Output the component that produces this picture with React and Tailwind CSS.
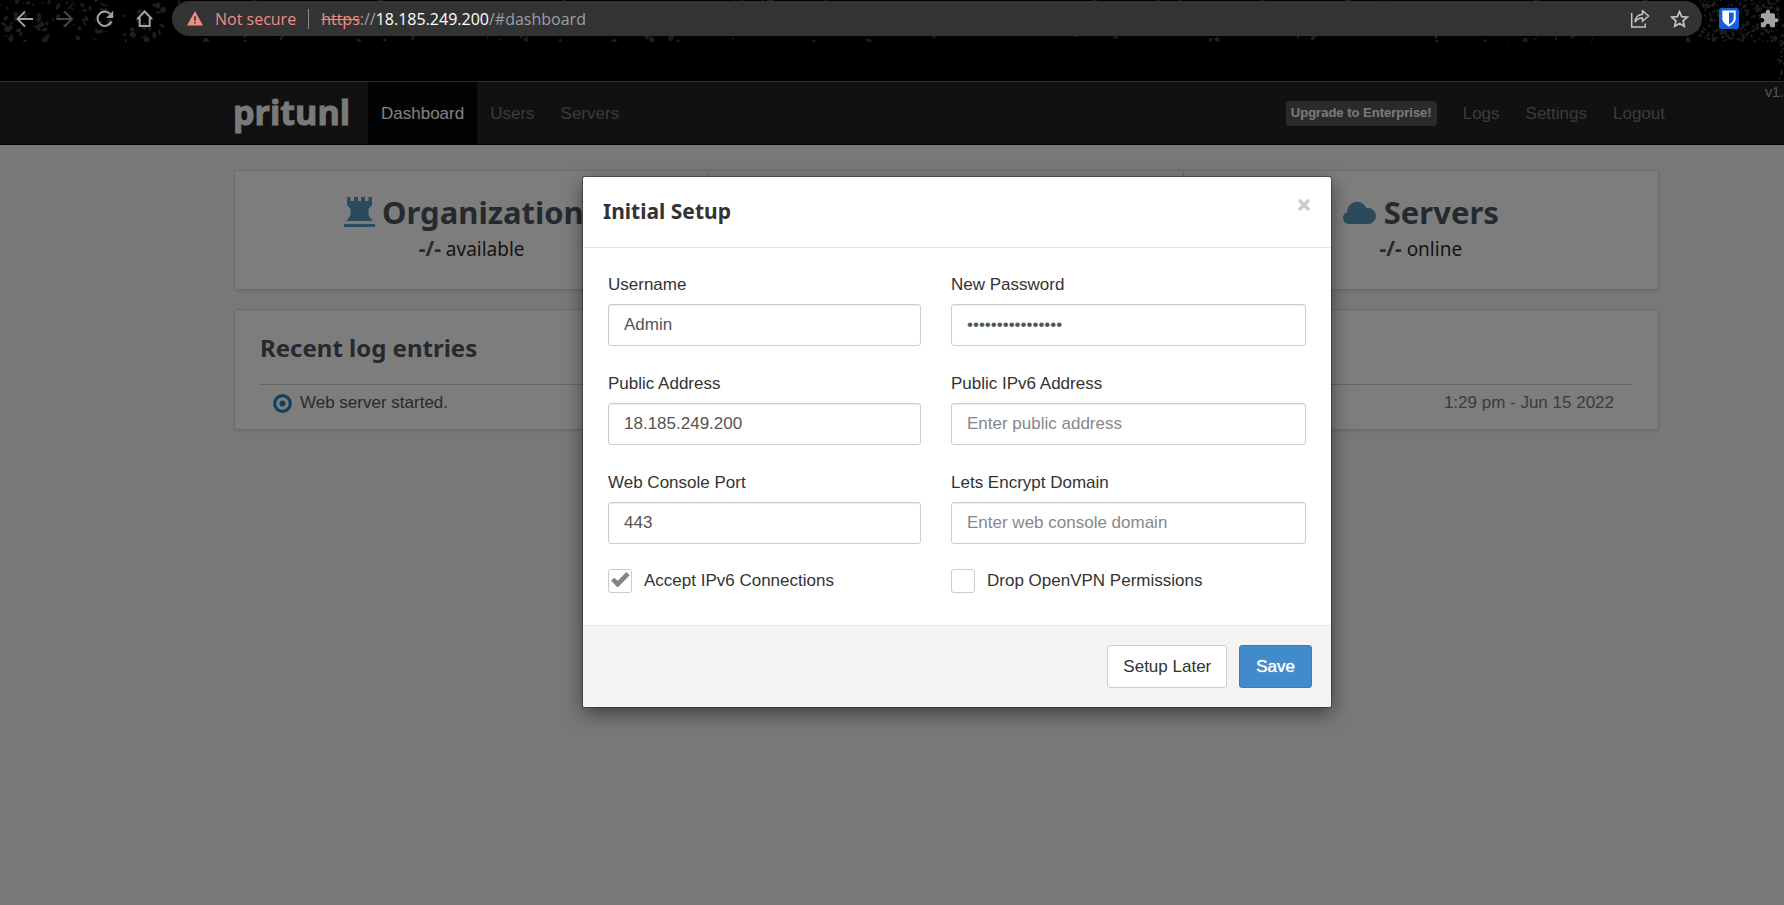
import React from "react";

function makeSpeckles() {
  let seed = 7;
  const rand = () => {
    seed = (seed * 16807) % 2147483647;
    return seed / 2147483647;
  };
  const dots = [];
  for (let i = 0; i < 520; i++) {
    const zone = rand();
    const right = zone > 0.65;
    const left = zone < 0.12;
    const x = right ? 1700 + rand() * 84 : left ? rand() * 172 : rand() * 1784;
    const y = rand() * 42;
    const w = right ? 1 + rand() * 3 : 1 + rand() * 5;
    dots.push({ x, y, w, h: 1 + rand() * (right ? 3 : 6), r: rand() * 180 });
  }
  for (let i = 0; i < 16; i++) {
    dots.push({ x: 1778 + rand() * 6, y: 42 + rand() * 38, w: 2, h: 3, r: rand() * 180 });
  }
  return dots;
}

const speckles = makeSpeckles();

function BrowserBar() {
  return (
    <header className="relative h-[81px] shrink-0 overflow-hidden bg-black font-['Open_Sans','Noto_Sans',sans-serif]">
      <svg className="absolute left-0 top-0 h-[81px] w-full" viewBox="0 0 1784 81" preserveAspectRatio="xMaxYMin slice" aria-hidden="true">
        {speckles.map((d, i) => (
          <ellipse key={i} cx={d.x} cy={d.y} rx={d.w / 2} ry={d.h / 2} fill="#1e1e1e" transform={`rotate(${d.r} ${d.x} ${d.y})`} />
        ))}
        <rect x="0" y="42" width="1776" height="39" fill="#000" />
      </svg>
      <div className="relative flex items-center pl-4 pt-px">
        <div className="flex w-[156px] shrink-0 gap-5">
          <button aria-label="Back" className="size-5">
            <svg viewBox="0 0 20 20" fill="none" stroke="#a3a3a3" strokeWidth="1.8">
              <path d="M17 10H2M9 2.500 1.500 10 9 17.500" />
            </svg>
          </button>
          <button aria-label="Forward" className="size-5">
            <svg viewBox="0 0 20 20" fill="none" stroke="#484848" strokeWidth="1.8">
              <path d="M.5 10H15.500M8.500 2.500 16 10l-7.500 7.500" />
            </svg>
          </button>
          <button aria-label="Reload" className="size-5">
            <svg viewBox="0 0 20 20" fill="none" stroke="#a3a3a3" strokeWidth="2">
              <path d="M15.400 12.500A7.200 7.200 0 1 1 14 4.800" />
              <path d="M17.200 1.800V9H10z" fill="#a3a3a3" stroke="none" />
            </svg>
          </button>
          <button aria-label="Home" className="size-5">
            <svg viewBox="0 0 20 20" fill="none" stroke="#a3a3a3" strokeWidth="2">
              <path d="M1.300 10 8.700 2.500 16 10M3.700 8.500v8.500h10V8.500" />
            </svg>
          </button>
        </div>
        <div className="flex h-[35px] min-w-0 flex-1 items-center rounded-full bg-[#333333] pl-[15px] pr-3 text-base">
          <svg viewBox="0 0 16 15" className="h-[15px] w-4 shrink-0" aria-hidden="true">
            <path d="M8 0 16 14.500H0z" fill="#f28b82" />
            <path d="M7.200 5.200h1.600v4.600H7.200zM7.200 11h1.600v1.600H7.200z" fill="#333" />
          </svg>
          <span className="ml-3 text-[#f28b82]">Not secure</span>
          <span className="mx-3 h-5 w-px shrink-0 bg-[#8a8a8a]" />
          <span className="whitespace-nowrap text-[#9aa0a6]">
            <span className="text-[#f28b82] line-through">https</span>://
            <span className="text-white">18.185.249.200</span>/#dashboard
          </span>
          <div className="ml-auto flex items-center gap-5">
            <button aria-label="Share" className="size-5">
              <svg viewBox="0 0 20 20" fill="none" stroke="#c4c4c4" strokeWidth="1.500">
                <path d="M1.700 4v14h13.500v-3.500" />
                <path d="M12.500 1.800 18.500 7l-6 5.200V9c-3.500 0-6 1.200-7.500 4.200.4-4.600 3.200-7.600 7.500-8z" />
              </svg>
            </button>
            <button aria-label="Bookmark this page" className="size-5">
              <svg viewBox="0 0 20 20" fill="none" stroke="#c4c4c4" strokeWidth="1.700">
                <path d="m9.500 2.600 2.200 5.100 5.600.5-4.200 3.700 1.200 5.400-4.800-2.900-4.800 2.900 1.200-5.400L1.700 8.200l5.600-.5z" />
              </svg>
            </button>
          </div>
        </div>
        <div className="flex w-[82px] shrink-0 items-center gap-5 pl-[17px]">
          <button aria-label="Password manager" className="size-[21px] shrink-0">
            <svg viewBox="0 0 21 21">
              <rect width="20" height="21" rx="2.500" fill="#175ddc" />
              <path d="M3.300 2.500h13.400v7.800c0 4-3.400 6.400-6.700 8.200-3.300-1.800-6.700-4.200-6.700-8.200z" fill="#fff" />
              <path d="M10 4.400h4.700v6c0 2.600-2.200 4.500-4.700 6z" fill="#175ddc" />
            </svg>
          </button>
          <button aria-label="Extensions" className="size-5 shrink-0">
            <svg viewBox="1 0 24 24" fill="#a3a3a3">
              <path d="M20.500 11H19V7c0-1.100-.9-2-2-2h-4V3.500a2.500 2.500 0 0 0-5 0V5H4c-1.100 0-1.990.9-1.990 2v3.800H3.500c1.490 0 2.700 1.210 2.700 2.700s-1.210 2.700-2.700 2.700H2V20c0 1.100.9 2 2 2h3.800v-1.500c0-1.490 1.210-2.700 2.700-2.700s2.700 1.210 2.700 2.700V22H17c1.100 0 2-.9 2-2v-4h1.500a2.500 2.500 0 0 0 0-5z" />
            </svg>
          </button>
        </div>
      </div>
    </header>
  );
}

function NavLink({ active, children }) {
  return (
    <a
      href="#dashboard"
      className={
        active
          ? "flex items-center bg-[#060606] px-[13px] pt-0.5 text-white"
          : "flex items-center px-[13px] pt-0.5 text-[#777777]"
      }
    >
      {children}
    </a>
  );
}

function NavBar() {
  return (
    <nav className="flex h-16 border-b border-t border-b-[#080808] border-t-[#5a5a5a] bg-[#222222] pl-[233px]">
      <div className="flex flex-1">
        <a
          href="#dashboard"
          className="flex w-[135px] items-center pb-0.5 font-['Open_Sans',sans-serif] text-[34px] font-bold leading-none text-[#f4f4f4] [-webkit-text-stroke:1px_#f4f4f4] [paint-order:stroke] [stroke-linejoin:round]"
        >
          pritunl
        </a>
        <NavLink active>Dashboard</NavLink>
        <NavLink>Users</NavLink>
        <NavLink>Servers</NavLink>
      </div>
      <div className="flex items-stretch">
        <button className="mr-[13px] h-[25px] self-center rounded-[3px] bg-[#555555] px-[5px] text-[13px] font-bold text-[#f4f4f4]">
          Upgrade to Enterprise!
        </button>
        <NavLink>Logs</NavLink>
        <NavLink>Settings</NavLink>
        <NavLink>Logout</NavLink>
      </div>
      <div className="ml-[87px] w-[19px] whitespace-nowrap text-sm leading-5 text-[#aaaaaa]">v1.</div>
    </nav>
  );
}

function Stat({ icon, title, label }) {
  return (
    <div className="flex flex-col items-center pt-5 font-['Noto_Sans',sans-serif]">
      <h2 className="flex items-center gap-[7px] text-[31px] font-bold leading-[42px] text-[#4a545f]">
        {icon}
        {title}
      </h2>
      <p className="text-[19px] leading-[30px] text-[#2b2b2b]">
        <span className="text-[21px] font-bold text-[#555555]">-/-</span> {label}
      </p>
    </div>
  );
}

const panel = "rounded-[3px] border border-[#d6d6d6] bg-[#fbfbfb] shadow-[0_2px_3px_rgba(0,0,0,0.08)]";

function Dashboard() {
  return (
    <main className="flex flex-col gap-[19px] pl-[234px] pr-[125px] pt-[25px]">
      <section className={`grid h-[120px] grid-cols-3 divide-x divide-[#d6d6d6] ${panel}`}>
        <Stat
          title="Organizations"
          label="available"
          icon={
            <svg viewBox="0 0 31 31" className="size-[31px]" fill="#5995b6" aria-hidden="true">
              <path d="M3 0h3.500v4h3.500V0h4v4h3V0h4v4h3.500V0H28v8l-3.500 4v6l4 6h-26l4-6v-6L3 8zM0 27h31v3H0z" />
            </svg>
          }
        />
        <div />
        <Stat
          title="Servers"
          label="online"
          icon={
            <svg viewBox="0 0 34 23" className="h-[23px] w-[34px]" fill="#5995b6" aria-hidden="true">
              <path d="M6 23a6 6 0 0 1-1.800-11.700A10 10 0 0 1 23.500 7.200 8 8 0 1 1 26 23z" />
            </svg>
          }
        />
      </section>
      <section className={`h-[121px] px-[25px] pt-5 ${panel}`}>
        <h2 className="pb-[18px] font-['Noto_Sans',sans-serif] text-2xl font-bold leading-9 text-[#4a545f]">Recent log entries</h2>
        <div className="flex items-center border-t border-[#cccccc] px-[13px] py-1.5 leading-6">
          <svg viewBox="0 0 19 19" className="mr-2 size-[19px]" aria-hidden="true">
            <circle cx="9.500" cy="9.500" r="7.800" fill="none" stroke="#2980b9" strokeWidth="3.200" />
            <circle cx="9.500" cy="9.500" r="3" fill="#2980b9" />
          </svg>
          <span className="text-[#555555]">Web server started.</span>
          <time className="ml-auto mr-[6px] text-[#777777]">1:29 pm - Jun 15 2022</time>
        </div>
      </section>
    </main>
  );
}

function Field({ id, label, type = "text", value, placeholder }) {
  return (
    <div className="flex flex-col gap-1.5">
      <label htmlFor={id} className="leading-[26px]">{label}</label>
      <input
        id={id}
        type={type}
        defaultValue={value}
        placeholder={placeholder}
        className="h-[42px] w-full rounded-[3px] border border-[#cccccc] bg-white px-[15px] text-[#555555] shadow-[inset_0_1px_1px_rgba(0,0,0,0.075)] outline-none placeholder:text-[#888888]"
      />
    </div>
  );
}

function Check({ label, checked }) {
  return (
    <label className="flex h-6 items-center gap-3">
      <span className="grid size-6">
        <input
          type="checkbox"
          defaultChecked={checked}
          className="peer col-start-1 row-start-1 size-6 appearance-none rounded-[3px] border border-[#cccccc] bg-white"
        />
        <svg viewBox="0 0 24 24" className="pointer-events-none invisible col-start-1 row-start-1 size-6 peer-checked:visible" fill="#858585" aria-hidden="true">
          <path d="M3 11.500 6.300 8.800 9.800 11.800 18.300 3 21.700 6.300 10.200 18H9z" />
        </svg>
      </span>
      {label}
    </label>
  );
}

function SetupDialog() {
  return (
    <form
      role="dialog"
      aria-label="Initial Setup"
      onSubmit={(e) => e.preventDefault()}
      className="w-[748px] overflow-hidden rounded-[2px] bg-white text-[#333333] shadow-[0_0_0_1px_rgba(0,0,0,0.3),0_6px_19px_rgba(0,0,0,0.5)]"
    >
      <div className="flex h-[71px] justify-between border-b border-[#e5e5e5] px-5">
        <h1 className="self-center font-['Noto_Sans',sans-serif] text-[21px] font-bold">Initial Setup</h1>
        <button type="button" aria-label="Close" className="mt-[21px] size-[14px]">
          <svg viewBox="0 0 14 14" fill="none" stroke="#cccccc" strokeWidth="3.400">
            <path d="m2 2 10 10M12 2 2 12" />
          </svg>
        </button>
      </div>
      <div className="grid grid-cols-[313fr_355fr] gap-x-[30px] gap-y-[25px] px-[25px] pb-8 pt-6">
        <Field id="username" label="Username" value="Admin" />
        <Field id="password" label="New Password" type="password" value="abcdefghijklmnop" />
        <Field id="address" label="Public Address" value="18.185.249.200" />
        <Field id="address6" label="Public IPv6 Address" placeholder="Enter public address" />
        <Field id="port" label="Web Console Port" value="443" />
        <Field id="domain" label="Lets Encrypt Domain" placeholder="Enter web console domain" />
        <Check label="Accept IPv6 Connections" checked />
        <Check label="Drop OpenVPN Permissions" />
      </div>
      <div className="flex justify-end gap-3 border-t border-[#e5e5e5] bg-[#f4f4f4] py-[19px] pr-[19px]">
        <button type="button" className="h-[43px] rounded-[3px] border border-[#cccccc] bg-white px-[15px]">Setup Later</button>
        <button type="submit" className="h-[43px] rounded-[3px] border border-[#357ebd] bg-[#428bca] px-4 text-white [text-shadow:0_0_1px_#fff]">Save</button>
      </div>
    </form>
  );
}

export default function App() {
  return (
    <div className="flex min-h-screen flex-col overflow-hidden font-['Liberation_Sans',Arial,sans-serif] text-[17px]">
      <BrowserBar />
      <div className="relative flex-1 bg-[#f1f1f1]">
        <NavBar />
        <Dashboard />
        <div className="absolute inset-0 flex items-start justify-center bg-black/50 pl-[130px] pt-24">
          <SetupDialog />
        </div>
      </div>
    </div>
  );
}
